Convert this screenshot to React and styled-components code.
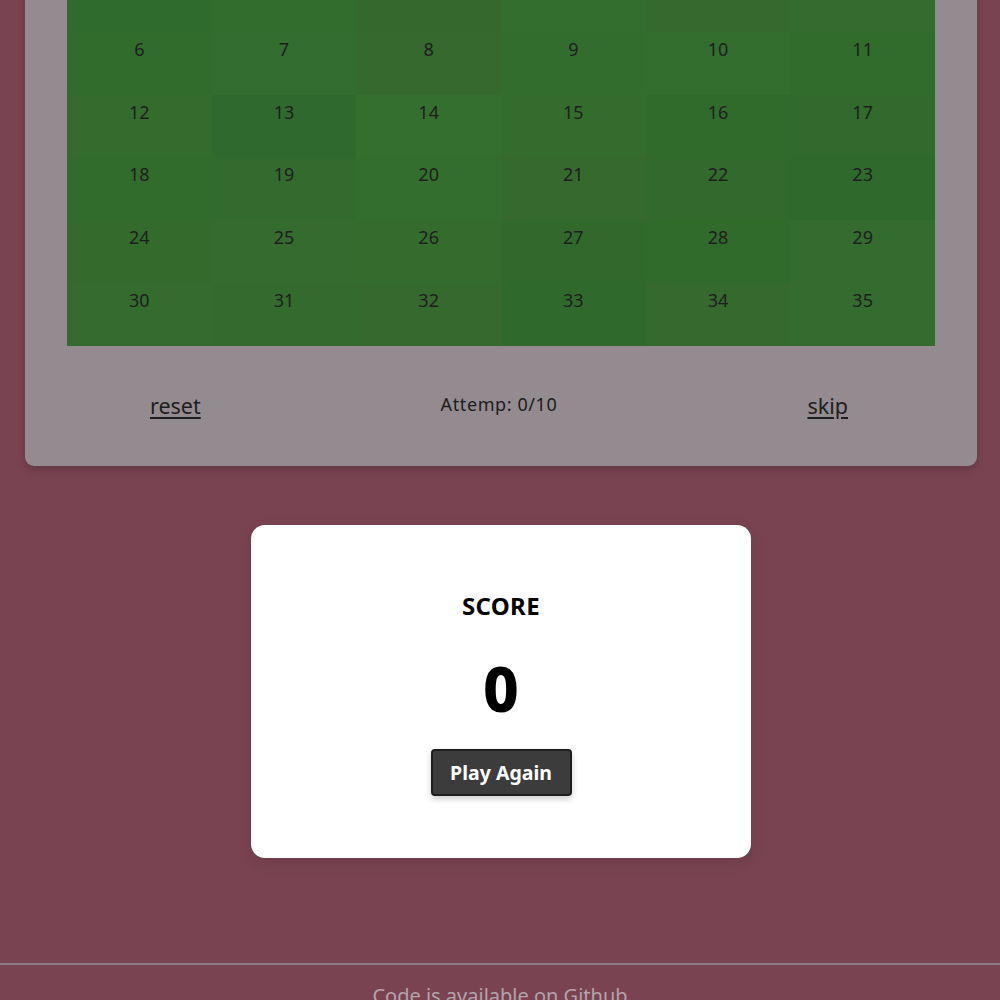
import React from 'react';
import styled, { createGlobalStyle } from 'styled-components';

const GlobalStyle = createGlobalStyle`
  body {
    margin: 0;
    background: #7a4352;
    font-family: "Noto Sans", "Open Sans", sans-serif;
    color: #1c1c1c;
  }
`

// slight random-ish shade per tile, as the game paints them
const shades = [
  '#2f6b2c', '#336d2e', '#35682d', '#336e2e', '#35692e', '#346b2e',
  '#326c2d', '#336d2f', '#35692e', '#336d2e', '#336e2f', '#316c2d',
  '#336c2d', '#30692e', '#346f2f', '#346c2d', '#316b2c', '#316a2c',
  '#326c2d', '#336b2e', '#336e2e', '#35692e', '#316a2c', '#30692c',
  '#336b2d', '#356b2f', '#346c2e', '#31692d', '#316b2c', '#336c2e',
  '#336c2e', '#336b2e', '#35692d', '#30692c', '#35692e', '#346b2e',
];

export default function App() {
  return (
    <>
      <GlobalStyle />
      <Page>
        <Board>
          <Grid>
            {shades.map((c, i) => (
              <Tile key={i} $bg={c}>{i}</Tile>
            ))}
          </Grid>
          <Controls>
            <TextLink href="#" $align="start">reset</TextLink>
            <Attempts>Attemp: 0/10</Attempts>
            <TextLink href="#" $align="end">skip</TextLink>
          </Controls>
        </Board>

        <ScoreCard>
          <ScoreLabel>SCORE</ScoreLabel>
          <ScoreValue>0</ScoreValue>
          <PlayButton>Play Again</PlayButton>
        </ScoreCard>

        <Footer>Code is available on Github</Footer>
      </Page>
    </>
  );
}

const Page = styled.div`
  margin-top: -71px;
  display: flex;
  flex-direction: column;
`

const Board = styled.div`
  margin: 0 23px 0 25px;
  padding: 40px 42px 0;
  background: #938b8f;
  border-radius: 0 0 9px 9px;
  box-shadow: 0 4px 8px rgba(0, 0, 0, 0.18);
`

const Grid = styled.div`
  display: grid;
  grid-template-columns: repeat(6, 1fr);
  grid-auto-rows: 62.8px;
`

const Tile = styled.div`
  background: ${p => p.$bg};
  text-align: center;
  font-size: 18px;
  line-height: 26px;
  padding-top: 4px;
  color: #1e1e1e;
`

const Controls = styled.div`
  height: 120px;
  display: grid;
  grid-template-columns: 1fr auto 1fr;
  align-items: center;
  padding: 0 87px 0 83px;
`

const TextLink = styled.a`
  justify-self: ${p => p.$align};
  font-size: 21.5px;
  color: #1e1e1e;
  text-decoration: underline;
  text-underline-offset: 3px;
`

const Attempts = styled.span`
  font-size: 18px;
  letter-spacing: 0.6px;
  margin-top: -4px;
`

const ScoreCard = styled.div`
  align-self: center;
  margin: 59px 0 0 2px;
  width: 500px;
  height: 333px;
  box-sizing: border-box;
  padding-top: 67px;
  background: #fff;
  border-radius: 14px;
  box-shadow: 0 4px 14px rgba(0, 0, 0, 0.12);
  display: flex;
  flex-direction: column;
  align-items: center;
  color: #000;
`

const ScoreLabel = styled.div`
  font-size: 24px;
  line-height: 28px;
  font-weight: 700;
  letter-spacing: 0.3px;
`

const ScoreValue = styled.div`
  margin-top: 33px;
  font-size: 62px;
  line-height: 70px;
  font-weight: 800;
`

const PlayButton = styled.button`
  margin-top: 26px;
  width: 141px;
  height: 47px;
  background: #3c3c3c;
  border: 2px solid #1e1e1e;
  border-radius: 4px;
  color: #fff;
  font-family: inherit;
  font-size: 19.5px;
  font-weight: 700;
  padding: 0;
  box-shadow: 0 3px 6px rgba(0, 0, 0, 0.2);
  cursor: pointer;
`

const Footer = styled.footer`
  margin-top: 105px;
  border-top: 2px solid #8f7a84;
  padding-top: 17px;
  text-align: center;
  font-size: 20px;
  color: #b3a4ab;
`
